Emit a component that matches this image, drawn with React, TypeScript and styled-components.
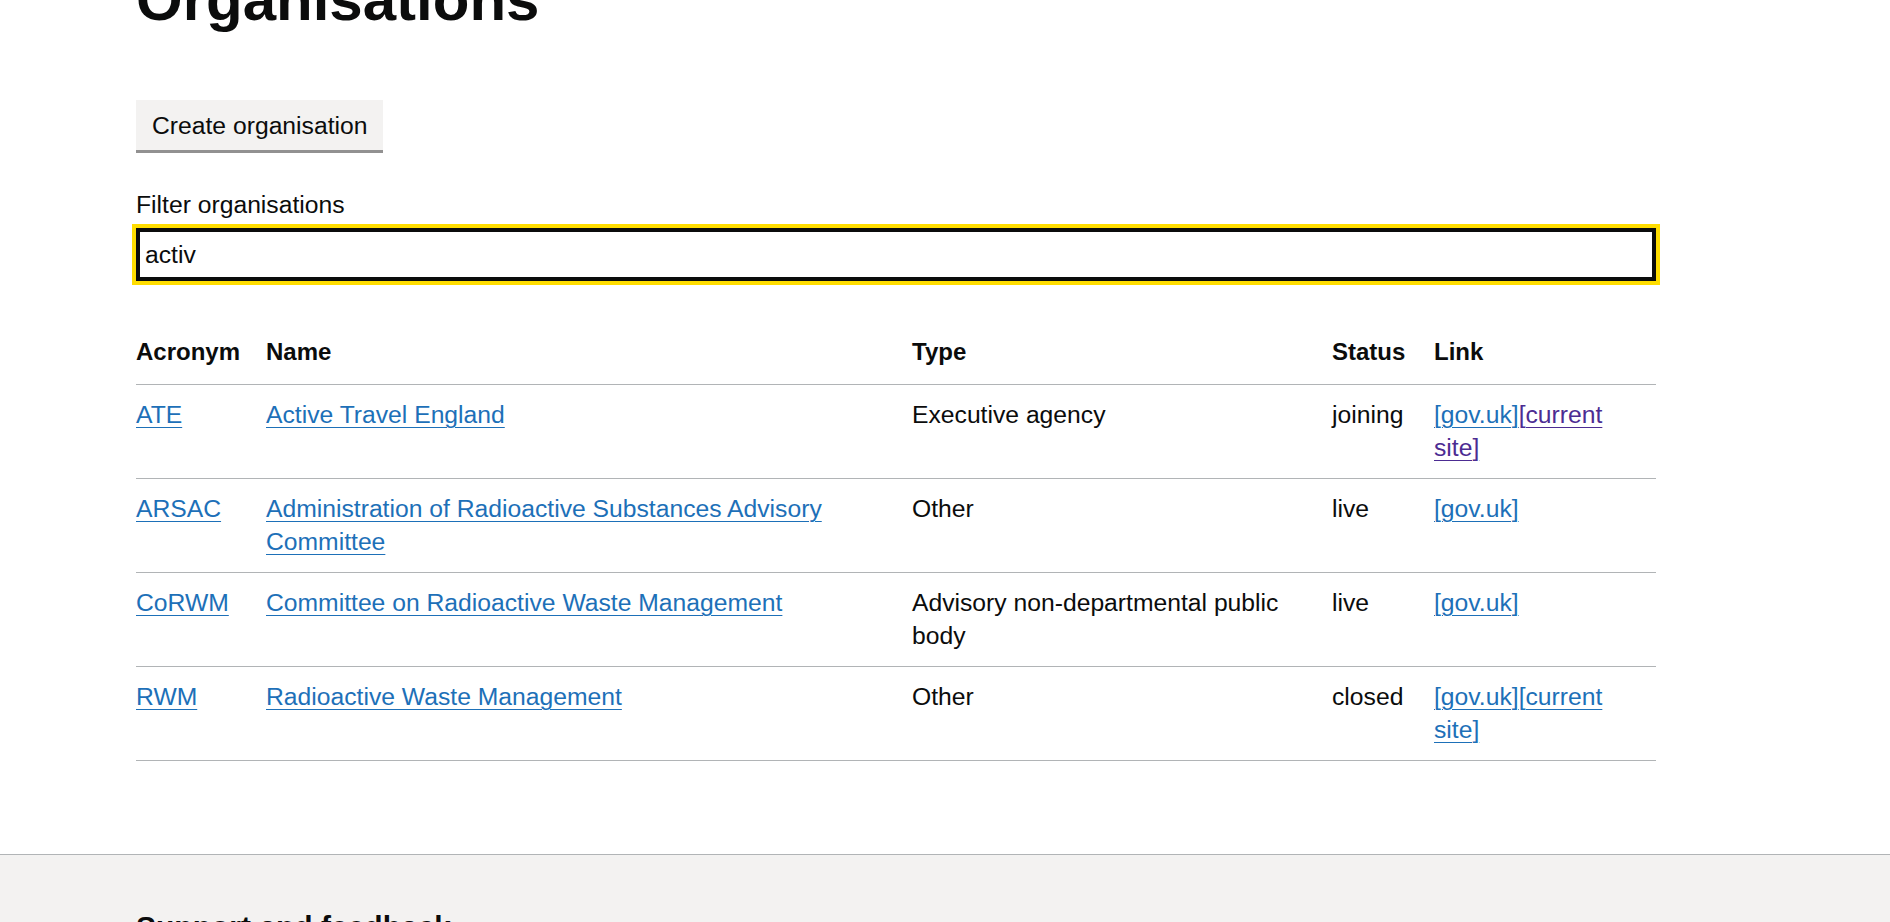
import React from "react";
import styled, {createGlobalStyle} from "styled-components";

const GlobalStyle = createGlobalStyle`
  html, body {
    margin: 0;
    padding: 0;
    background: #ffffff;
    overflow: hidden;
  }
  body {
    font-family: "Liberation Sans", Arial, sans-serif;
    color: #0b0c0c;
    -webkit-font-smoothing: antialiased;
  }
`

const Main = styled.main`
  width: 1520px;
  padding: 0 0 0 136px;
`

const Heading = styled.h1`
  margin: -34px 0 67px;
  font-size: 60px;
  line-height: 67px;
  font-weight: 700;
`

const Button = styled.button`
  display: inline-block;
  margin: 0 0 38px;
  padding: 10px 13px 9px;
  border: 3px solid transparent;
  background: #f3f2f1;
  box-shadow: 0 3px 0 #929191;
  color: #0b0c0c;
  font-family: inherit;
  font-size: 24.7px;
  line-height: 25px;
  cursor: pointer;
`

const FormGroup = styled.div`
  margin-bottom: 41px;
`

const Label = styled.label`
  display: block;
  margin-bottom: 7px;
  font-size: 24.7px;
  line-height: 33px;
`

const Input = styled.input`
  box-sizing: border-box;
  display: block;
  width: 100%;
  height: 53px;
  margin: 0;
  padding: 0 6px;
  border: 3px solid #0b0c0c;
  border-radius: 0;
  box-shadow: inset 0 0 0 1px #0b0c0c;
  outline: 4px solid #ffdd00;
  outline-offset: 0;
  font-family: inherit;
  font-size: 24.7px;
  color: #0b0c0c;
`

const Table = styled.table`
  width: 100%;
  table-layout: fixed;
  border-collapse: collapse;
  border-spacing: 0;
  margin-bottom: 93px;
`

const Th = styled.th<{ $w: number }>`
  box-sizing: border-box;
  width: ${p => p.$w}px;
  padding: 13px 27px 16px 0;
  border-bottom: 1px solid #b1b4b6;
  text-align: left;
  vertical-align: top;
  font-size: 24px;
  line-height: 33px;
  font-weight: 700;
  white-space: nowrap;
`

const Td = styled.td`
  padding: 13px 27px 14px 0;
  border-bottom: 1px solid #b1b4b6;
  text-align: left;
  vertical-align: top;
  font-size: 24.7px;
  line-height: 33px;
`

const Link = styled.a<{ $visited?: boolean }>`
  color: ${p => (p.$visited ? "#4c2c92" : "#1d70b8")};
  text-decoration: underline;
  text-decoration-thickness: 1px;
  text-underline-offset: 0.16em;
`

const Footer = styled.footer`
  border-top: 1px solid #b1b4b6;
  background: #f3f2f1;
  padding: 52px 0 60px 136px;
  min-height: 200px;
`

const FooterHeading = styled.h2`
  margin: 0;
  font-size: 30px;
  line-height: 40px;
  font-weight: 700;
`

type Org = {
  acronym: string,
  name: string,
  type: string,
  status: string,
  current?: boolean,
  visited?: boolean,
}

const orgs: Org[] = [
  {acronym: "ATE", name: "Active Travel England", type: "Executive agency", status: "joining", current: true, visited: true},
  {acronym: "ARSAC", name: "Administration of Radioactive Substances Advisory Committee", type: "Other", status: "live"},
  {acronym: "CoRWM", name: "Committee on Radioactive Waste Management", type: "Advisory non-departmental public body", status: "live"},
  {acronym: "RWM", name: "Radioactive Waste Management", type: "Other", status: "closed", current: true},
]

const App = () => {
  const [filter, setFilter] = React.useState("activ");
  return (
    <>
      <GlobalStyle/>
      <Main>
        <Heading>Organisations</Heading>
        <Button type="button">Create organisation</Button>
        <FormGroup>
          <Label htmlFor="filter">Filter organisations</Label>
          <Input id="filter" value={filter} onChange={(e) => setFilter(e.target.value)}/>
        </FormGroup>
        <Table>
          <thead>
          <tr>
            <Th $w={130}>Acronym</Th>
            <Th $w={646}>Name</Th>
            <Th $w={420}>Type</Th>
            <Th $w={102}>Status</Th>
            <Th $w={222}>Link</Th>
          </tr>
          </thead>
          <tbody>
          {orgs.map(org => (
            <tr key={org.acronym}>
              <Td><Link href="#">{org.acronym}</Link></Td>
              <Td><Link href="#">{org.name}</Link></Td>
              <Td>{org.type}</Td>
              <Td>{org.status}</Td>
              <Td>
                <Link href="#">[gov.uk]</Link>
                {org.current && <Link href="#" $visited={org.visited}>[current site]</Link>}
              </Td>
            </tr>
          ))}
          </tbody>
        </Table>
      </Main>
      <Footer>
        <FooterHeading>Support and feedback</FooterHeading>
      </Footer>
    </>
  )
}

export default App
